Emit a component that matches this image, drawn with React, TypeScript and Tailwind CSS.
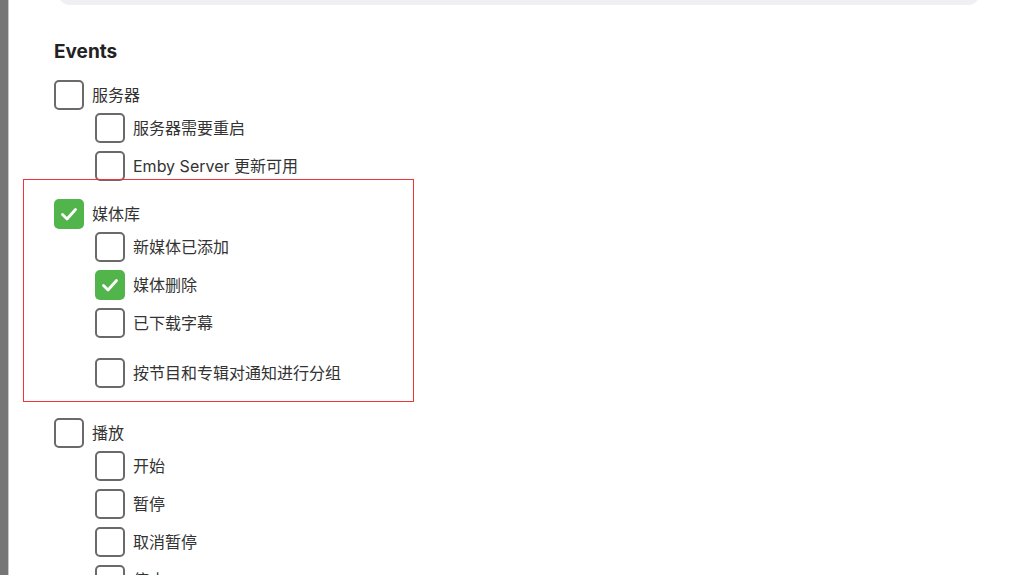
import React from "react";

interface Item {
  label: string;
  checked?: boolean;
  extraTop?: boolean;
}

interface Group {
  label: string;
  checked?: boolean;
  items: Item[];
}

const groups: Group[] = [
  {
    label: "服务器",
    items: [{ label: "服务器需要重启" }, { label: "Emby Server 更新可用" }],
  },
  {
    label: "媒体库",
    checked: true,
    items: [
      { label: "新媒体已添加" },
      { label: "媒体删除", checked: true },
      { label: "已下载字幕" },
      { label: "按节目和专辑对通知进行分组", extraTop: true },
    ],
  },
  {
    label: "播放",
    items: [{ label: "开始" }, { label: "暂停" }, { label: "取消暂停" }, { label: "停止" }],
  },
];

function Box({ checked }: { checked?: boolean }) {
  if (checked) {
    return (
      <span className="w-[30px] h-[30px] shrink-0 rounded-[5px] bg-[#52b54b] flex items-center justify-center">
        <svg width="20" height="20" viewBox="0 0 20 20" fill="none">
          <path d="M3.5 10.5 L8 15 L16.5 5.5" stroke="#fff" strokeWidth="2.8" strokeLinecap="round" strokeLinejoin="round" />
        </svg>
      </span>
    );
  }
  return <span className="w-[30px] h-[30px] shrink-0 rounded-[5px] border-2 border-[#6a6a6a] bg-white" />;
}

function Row({ label, checked }: { label: string; checked?: boolean }) {
  return (
    <label className="h-[30px] flex items-center gap-[8px] cursor-pointer">
      <Box checked={checked} />
      <span className="text-[16px] text-[#333] leading-none">{label}</span>
    </label>
  );
}

function GroupBlock({ group }: { group: Group }) {
  return (
    <div>
      <Row label={group.label} checked={group.checked} />
      <div className="mt-[3px] pl-[41px] flex flex-col gap-[8px]">
        {group.items.map((it) => (
          <div key={it.label} className={it.extraTop ? "mt-[12px]" : ""}>
            <Row label={it.label} checked={it.checked} />
          </div>
        ))}
      </div>
    </div>
  );
}

export default function App() {
  return (
    <div
      className="w-[1024px] h-[575px] overflow-hidden bg-white flex"
      style={{ fontFamily: 'Inter, "Noto Sans CJK SC", sans-serif' }}
    >
      <div className="w-[9px] shrink-0 bg-[#767676] border-r border-[#c9c9c9]" />
      <div className="flex-1">
        <div className="relative h-[5px] ml-[49px] mr-[44px] overflow-hidden">
          <div className="absolute left-0 right-0 bottom-0 h-[24px] rounded-xl bg-[#f0f0f4]" />
        </div>
        <div className="pl-[45px] pt-[35px]">
          <h2 className="h-[24px] flex items-center text-[19px] font-bold text-[#222]">Events</h2>
          <div className="mt-[16px] flex flex-col">
            <GroupBlock group={groups[0]} />
            <div className="-mt-[2px] -ml-[31px] w-[391px] border border-[#f2343a] pl-[30px] pt-[19px] pb-[13px]">
              <GroupBlock group={groups[1]} />
            </div>
            <div className="mt-[16px]">
              <GroupBlock group={groups[2]} />
            </div>
          </div>
        </div>
      </div>
    </div>
  );
}
